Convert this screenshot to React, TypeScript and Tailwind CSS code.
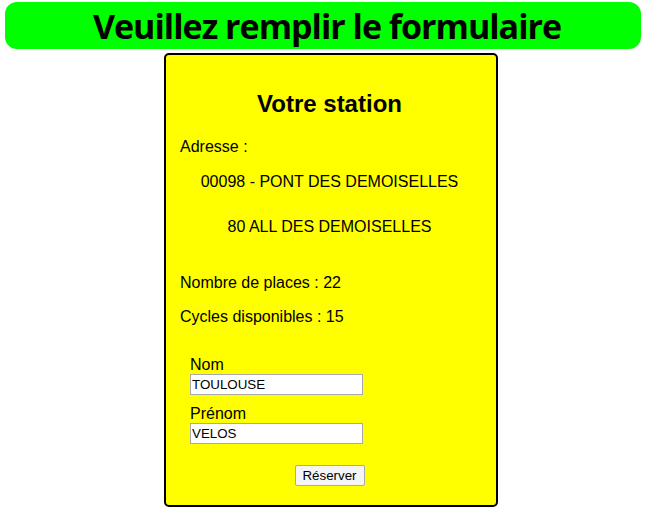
import React, { useState } from "react";

const App: React.FC = () => {
  const [nom, setNom] = useState("TOULOUSE");
  const [prenom, setPrenom] = useState("VELOS");

  return (
    <div className="min-h-screen bg-white text-black font-['Liberation_Sans',Arial,sans-serif]">
      <div className="px-[5px] pt-[2px]">
        <h1 className="h-[47px] rounded-[12px] bg-[#00ff00] flex items-center justify-center pl-[8px] text-[34px] font-bold leading-none tracking-[-1px] font-['Open_Sans','Noto_Sans',sans-serif]">
          Veuillez remplir le formulaire
        </h1>
      </div>

      <div className="ml-[164px] mt-[4px] w-[334px] rounded-[5px] border-2 border-black bg-[#ffff00] pl-[14px] pr-[17px] pt-[35px] pb-[19px] text-[16px]">
        <h2 className="text-center text-[24px] font-bold leading-[27px]">Votre station</h2>

        <div className="mt-[21px] leading-[18px]">Adresse :</div>
        <div className="mt-[17px] text-center leading-[18px]">00098 - PONT DES DEMOISELLES</div>
        <div className="mt-[27px] text-center leading-[18px]">80 ALL DES DEMOISELLES</div>

        <div className="mt-[38px] leading-[18px]">Nombre de places : 22</div>
        <div className="mt-[16px] leading-[18px]">Cycles disponibles : 15</div>

        <form className="mt-[30px] pl-[10px]" onSubmit={(e) => e.preventDefault()}>
          <label className="block leading-[18px]">Nom</label>
          <input
            value={nom}
            onChange={(e) => setNom(e.target.value)}
            className="block h-[21px] w-[173px] border border-[#a9a9a9] bg-white px-[1px] text-[13.33px] text-black outline-none"
          />
          <label className="mt-[10px] block leading-[18px]">Prénom</label>
          <input
            value={prenom}
            onChange={(e) => setPrenom(e.target.value)}
            className="block h-[21px] w-[173px] border border-[#a9a9a9] bg-white px-[1px] text-[13.33px] text-black outline-none"
          />
          <div className="mt-[21px] flex justify-center pr-[10px]">
            <button
              type="submit"
              className="h-[21px] w-[70px] rounded-[2px] border border-[#a9a9a9] bg-[#f5f5f5] text-[13.33px] leading-none text-black"
            >
              Réserver
            </button>
          </div>
        </form>
      </div>
      <div className="h-px bg-[#e9e9e9]" />
    </div>
  );
};

export default App;
